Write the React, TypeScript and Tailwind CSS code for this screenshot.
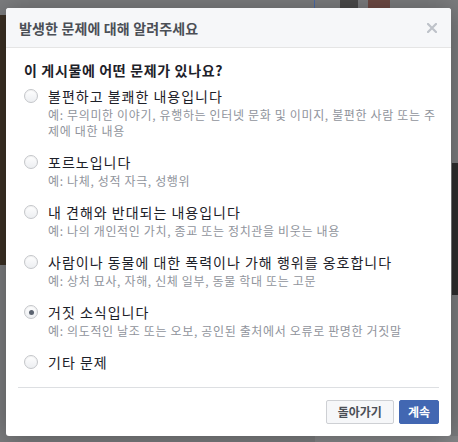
import React from "react";

const options = [
  {
    label: "불편하고 불쾌한 내용입니다",
    desc: "예: 무의미한 이야기, 유행하는 인터넷 문화 및 이미지, 불편한 사람 또는 주제에 대한 내용",
  },
  { label: "포르노입니다", desc: "예: 나체, 성적 자극, 성행위" },
  { label: "내 견해와 반대되는 내용입니다", desc: "예: 나의 개인적인 가치, 종교 또는 정치관을 비웃는 내용" },
  { label: "사람이나 동물에 대한 폭력이나 가해 행위를 옹호합니다", desc: "예: 상처 묘사, 자해, 신체 일부, 동물 학대 또는 고문" },
  { label: "거짓 소식입니다", desc: "예: 의도적인 날조 또는 오보, 공인된 출처에서 오류로 판명한 거짓말", checked: true },
  { label: "기타 문제" },
];

const Radio: React.FC<{ checked?: boolean }> = ({ checked }) => (
  <span className="mt-[2px] w-[14px] h-[14px] shrink-0 rounded-full border border-[#c4c6ca] bg-gradient-to-b from-[#ffffff] to-[#eceef1] shadow-[inset_0_1px_1px_rgba(0,0,0,0.06)] flex items-center justify-center">
    {checked && <span className="w-[5px] h-[5px] rounded-full bg-[#5b6370]" />}
  </span>
);

export default function App() {
  return (
    <div className="relative w-[458px] h-[442px] overflow-hidden bg-[#7b7c7e] pt-[8px] pl-[6px] font-['Noto_Sans_CJK_KR',sans-serif]">
      {/* dimmed page behind the dialog */}
      <div className="absolute left-0 top-[15px] w-[6px] h-[250px] bg-[#3b3024]" />
      <div className="absolute left-[314px] top-0 w-[1px] h-[8px] bg-[#4a6aa8]" />
      <div className="absolute left-[340px] top-0 w-[18px] h-[8px] bg-[#4a4a4a]" />
      <div className="absolute left-[368px] top-0 w-[22px] h-[8px] bg-[#6e4a44]" />
      <div className="absolute left-[452px] top-[163px] w-[6px] h-[132px] bg-[#2e2e2e]" />
      <div className="absolute left-[315px] top-[436px] w-[143px] h-[6px] bg-[#858688]" />

      <div className="relative w-[445px] rounded-[3px] bg-white shadow-[0_2px_26px_rgba(0,0,0,0.3)] overflow-hidden">
        <div className="h-[40px] bg-[#f6f7f9] border-b border-[#e5e5e5] flex items-center justify-between pl-[13px] pr-[14px]">
          <span className="text-[14px] font-bold text-[#4b4f56] leading-[18px] tracking-[0.15px]">발생한 문제에 대해 알려주세요</span>
          <svg width="10" height="10" viewBox="0 0 10 10" className="mt-[1px]">
            <path d="M1 1 L9 9 M9 1 L1 9" stroke="#bec2c9" strokeWidth="2.2" strokeLinecap="square" />
          </svg>
        </div>

        <div className="px-[12px] pt-[12px]">
          <div className="pl-[6px]">
            <h2 className="text-[14px] font-bold text-[#1d2129] leading-[20px] tracking-[0.65px]">이 게시물에 어떤 문제가 있나요?</h2>
            <div className="mt-[7px] flex flex-col gap-[14px]">
              {options.map((o) => (
                <div key={o.label} className="flex items-start gap-[10px]">
                  <Radio checked={o.checked} />
                  <div className="flex-1 pr-[2px]">
                    <div className="text-[14px] leading-[18px] text-[#1d2129] tracking-[1px]">{o.label}</div>
                    {o.desc && (
                      <div className="mt-[2px] text-[12px] leading-[16px] text-[#90949c] tracking-[0.65px] break-all">{o.desc}</div>
                    )}
                  </div>
                </div>
              ))}
            </div>
          </div>
          <div className="mt-[16px] border-t border-[#dddfe2]" />
          <div className="flex justify-end gap-[5px] pt-[12px] pb-[12px]">
            <button className="h-[24px] px-[11px] rounded-[2px] border border-[#ced0d4] bg-[#f6f7f9] text-[12px] font-bold text-[#4b4f56]">
              돌아가기
            </button>
            <button className="h-[24px] px-[8px] rounded-[2px] border border-[#4267b2] bg-[#4267b2] text-[12px] font-bold text-white">
              계속
            </button>
          </div>
        </div>
      </div>
    </div>
  );
}
